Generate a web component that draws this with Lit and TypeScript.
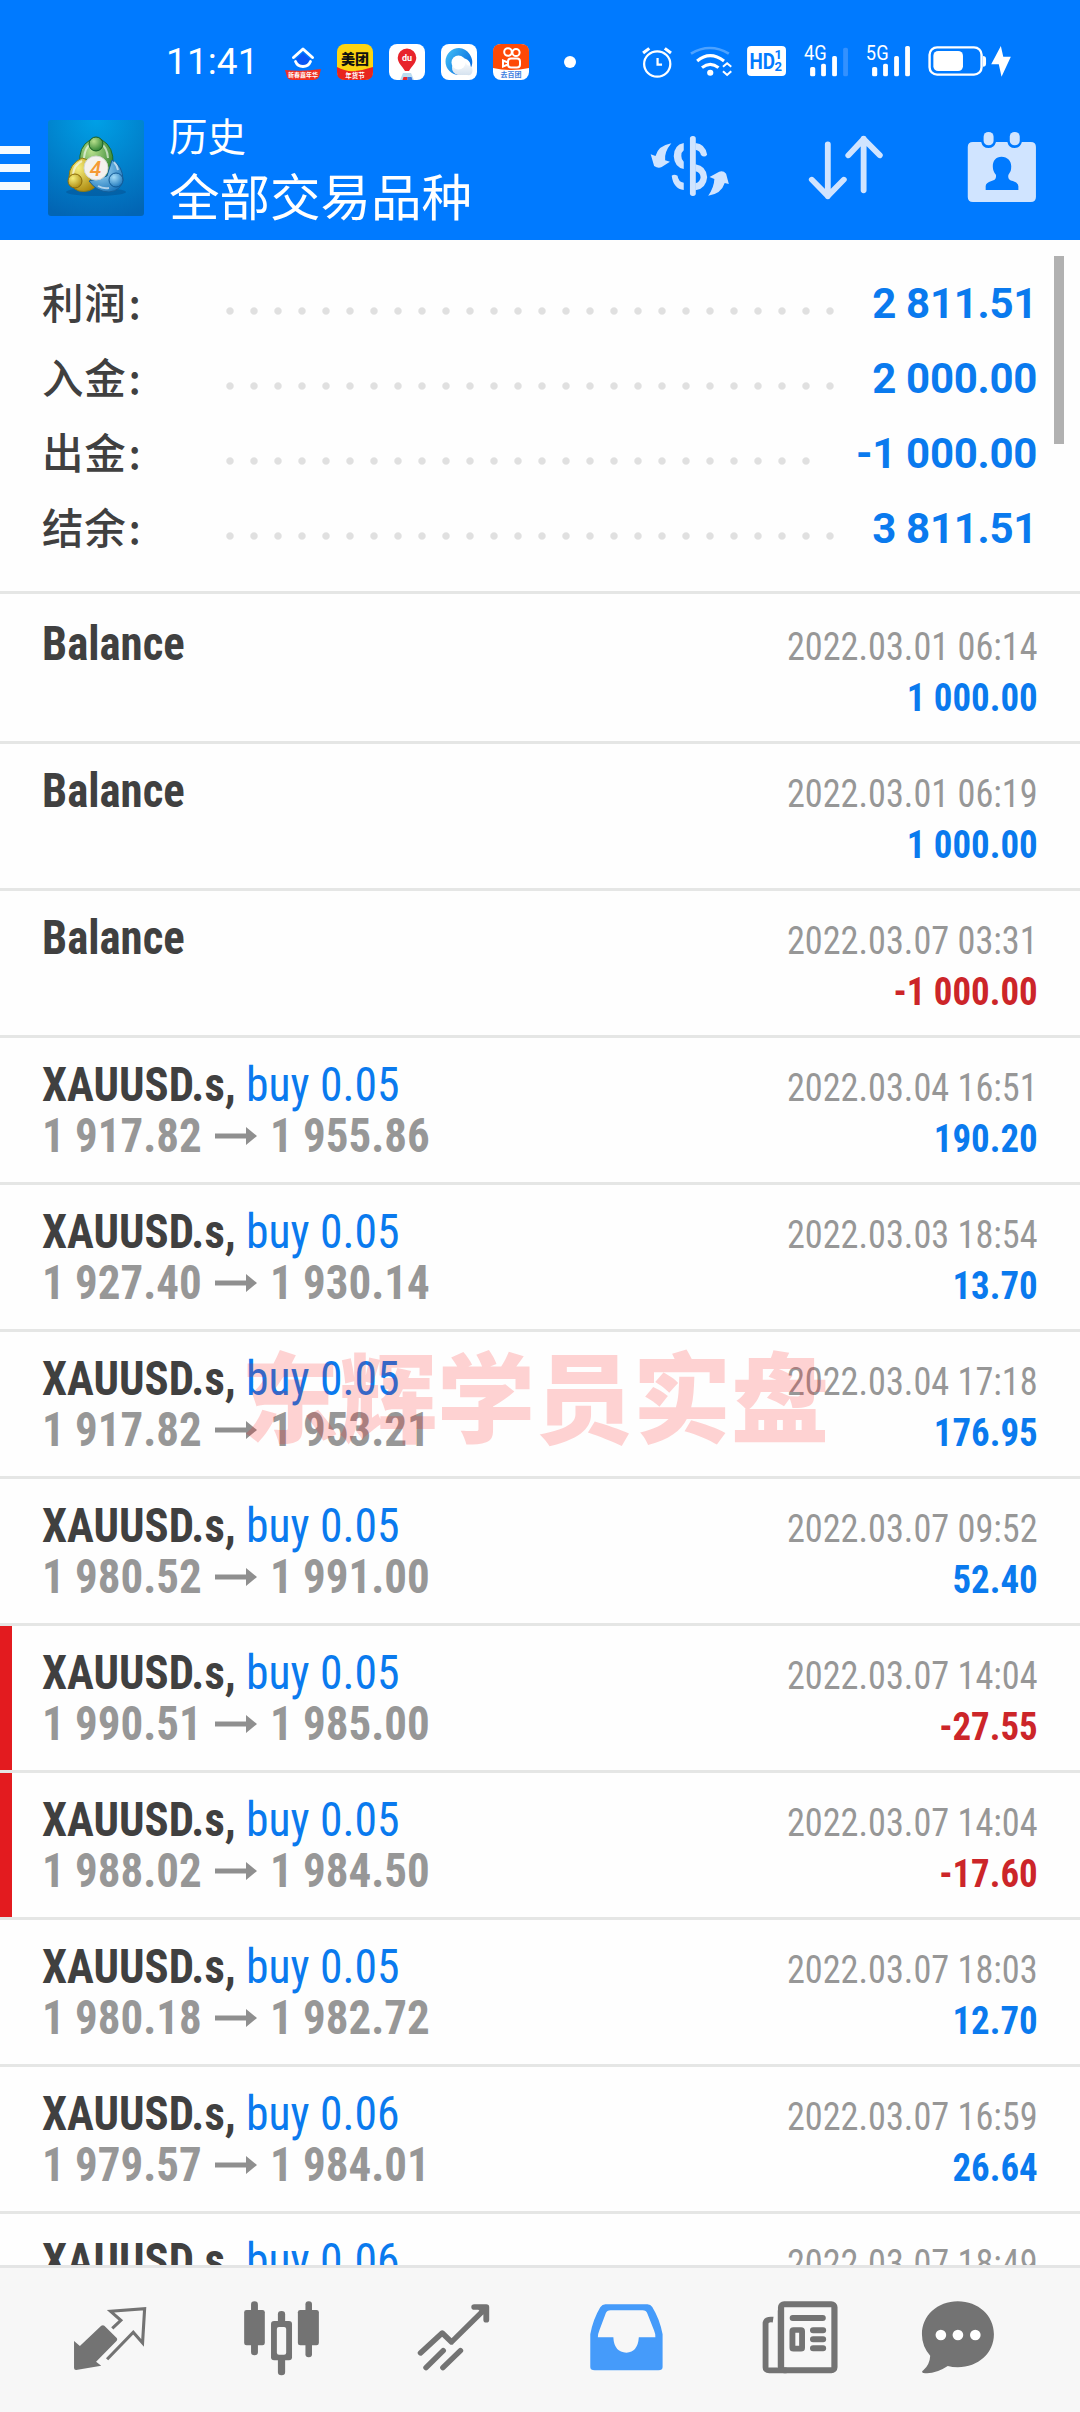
import { LitElement, html, svg, css, nothing } from "lit";
import { customElement, property } from "lit/decorators.js";
import { classMap } from "lit/directives/class-map.js";

interface Deal {
  symbol?: string;
  side?: string;
  open?: string;
  close?: string;
  time: string;
  profit: string;
  stopped?: boolean;
}

const SUMMARY = [
  { label: "利润", value: "2 811.51" },
  { label: "入金", value: "2 000.00" },
  { label: "出金", value: "-1 000.00" },
  { label: "结余", value: "3 811.51" },
];

const deal = (side: string, open: string, close: string, time: string, profit: string, stopped = false): Deal => ({
  symbol: "XAUUSD.s,", side, open, close, time, profit, stopped,
});

const DEALS: Deal[] = [
  { time: "2022.03.01 06:14", profit: "1 000.00" },
  { time: "2022.03.01 06:19", profit: "1 000.00" },
  { time: "2022.03.07 03:31", profit: "-1 000.00" },
  deal("buy 0.05", "1 917.82", "1 955.86", "2022.03.04 16:51", "190.20"),
  deal("buy 0.05", "1 927.40", "1 930.14", "2022.03.03 18:54", "13.70"),
  deal("buy 0.05", "1 917.82", "1 953.21", "2022.03.04 17:18", "176.95"),
  deal("buy 0.05", "1 980.52", "1 991.00", "2022.03.07 09:52", "52.40"),
  deal("buy 0.05", "1 990.51", "1 985.00", "2022.03.07 14:04", "-27.55", true),
  deal("buy 0.05", "1 988.02", "1 984.50", "2022.03.07 14:04", "-17.60", true),
  deal("buy 0.05", "1 980.18", "1 982.72", "2022.03.07 18:03", "12.70"),
  deal("buy 0.06", "1 979.57", "1 984.01", "2022.03.07 16:59", "26.64"),
  { symbol: "XAUUSD.s,", side: "buy 0.06", time: "2022.03.07 18:49", profit: "" },
];

/* ---------- status bar ---------- */
@customElement("status-bar")
export class StatusBar extends LitElement {
  static styles = css`
    :host { display: block; }
    .bar { display: flex; align-items: center; height: 96px; padding-top: 28px; box-sizing: border-box; color: #fff; }
    .time { width: 285px; padding-left: 166px; box-sizing: border-box; font: 400 37px/36px Roboto, sans-serif; letter-spacing: 0.100px; white-space: nowrap; }
    .apps { display: flex; gap: 16px; }
    svg { display: block; flex: none; }
    .dot { width: 12px; height: 12px; border-radius: 50%; background: #fff; margin-left: 35px; }
    .system { margin-left: 64px; }
    text { font-family: "Roboto", "Noto Sans CJK SC", sans-serif; }
  `;
  render() {
    return html`
      <div class="bar">
        <div class="time">11:41</div>
        <div class="apps">
          <svg width="36" height="36" viewBox="0 0 36 36">
            <path d="M18 9l7 6-3 5q-4 3-8 0l-3-5z" fill="#0a56f5"/>
            <path d="M8.500 13.500 18 5l9.500 8.500" fill="none" stroke="#fff" stroke-width="3" stroke-linecap="round" stroke-linejoin="round"/>
            <path d="M10.500 17.500q2 5 7.500 5t7.500-5" fill="none" stroke="#fff" stroke-width="2.800" stroke-linecap="round"/>
            <path d="M0 26q18 2 36-1l-2 8q-2 3-6 3H8q-5 0-6-3z" fill="#ee2f22"/>
            <text x="18" y="33.300" font-size="6" font-weight="700" fill="#fff" text-anchor="middle">新春嘉年华</text>
          </svg>
          <svg width="36" height="36" viewBox="0 0 36 36">
            <rect width="36" height="36" rx="8" fill="#fcd411"/>
            <path d="M0 23q9 5 18 4t18-4v5q0 8-8 8H8q-8 0-8-8z" fill="#e8251d"/>
            <text x="18" y="20" font-size="14" font-weight="900" fill="#111" text-anchor="middle">美团</text>
            <text x="18" y="34" font-size="6.500" font-weight="700" fill="#fff" text-anchor="middle">年货节</text>
          </svg>
          <svg width="36" height="36" viewBox="0 0 36 36">
            <rect width="36" height="36" rx="8" fill="#fff"/>
            <path d="M14 29h8l3 7H11z" fill="#bcdcf0"/><path d="M14.500 33h4v3h-5z" fill="#e8262c"/><path d="M18.500 33h4l1 3h-5z" fill="#3b78e0"/>
            <path d="M18 4.500a9.300 9.300 0 0 1 9.300 9.300c0 5-4.500 8.500-7.300 13.200h-4c-2.800-4.700-7.300-8.200-7.300-13.200A9.300 9.300 0 0 1 18 4.500z" fill="#e8232b"/>
            <text x="18" y="17" font-size="9" font-weight="700" fill="#fff" text-anchor="middle">du</text>
          </svg>
          <svg width="36" height="36" viewBox="0 0 36 36">
            <defs>
              <linearGradient id="q" x1="0" y1="0" x2="1" y2="0.600"><stop offset="0" stop-color="#45c2f6"/><stop offset="1" stop-color="#086ee0"/></linearGradient>
              <linearGradient id="c" x1="0" y1="0" x2="0" y2="1"><stop offset="0" stop-color="#fff"/><stop offset="1" stop-color="#d5e2ef"/></linearGradient>
            </defs>
            <rect width="36" height="36" rx="8" fill="#fff"/>
            <path d="M18 4a13 13 0 1 0 0 27 10 10 0 0 1-6-8 9 9 0 0 1 13-8c4 2 5 5 4.500 9.500 3-5 2-10-1-14.500A14 14 0 0 0 18 4z" fill="url(#q)"/>
            <path d="M17 31a7.500 7.500 0 0 1-6-8q1-7 8-7 5 0 7 5 6 1 5.500 6t-5.500 4z" fill="url(#c)"/>
            <circle cx="17.500" cy="18.500" r="7" fill="#fff"/>
          </svg>
          <svg width="36" height="36" viewBox="0 0 36 36">
            <rect width="36" height="36" rx="8" fill="#fff"/>
            <path d="M0 24V8q0-8 8-8h20q8 0 8 8v16q-18 4-36 0z" fill="#fe4906"/>
            <g fill="none" stroke="#fff" stroke-width="2"><circle cx="15" cy="8" r="3.800"/><circle cx="23" cy="8.500" r="3.600"/><rect x="15" y="14.500" width="12" height="9" rx="3"/><path d="M10 16.500v6l5-2v-2z"/></g>
            <text x="18" y="33" font-size="7" font-weight="700" fill="#3d7ee0" text-anchor="middle">去百团</text>
          </svg>
        </div>
        <div class="dot"></div>
        <!-- alarm, wifi, voice line, two signal meters and the battery -->
        <svg class="system" width="376" height="36" viewBox="290 132 1092 108" preserveAspectRatio="none">
          <g fill="none" stroke="#fff" stroke-width="6.500">
            <circle cx="340" cy="192" r="38"/>
            <path d="M341 174v20h13"/>
            <path d="M299 159l18-14M380 159l-18-14" stroke-width="9"/>
          </g>
          <g fill="none" stroke="#fff">
            <path d="M438 161q55-34 110 0" stroke="#4da2ff" stroke-width="8"/>
            <path d="M456 183q37-32 78 0" stroke-width="9"/>
            <path d="M470 203q24-20 48 0" stroke-width="9"/>
            <path d="M531 200l12-10 12 10M531 214l12 11 12-11" stroke-width="6"/>
          </g>
          <circle cx="494" cy="218" r="9" fill="#fff"/>
          <rect x="601" y="138" width="113" height="90" rx="12" fill="#fff"/>
          <g fill="#007aff" font-weight="700">
            <text x="608" y="206" font-size="64" textLength="74" lengthAdjust="spacingAndGlyphs">HD</text>
            <text x="681" y="178" font-size="38">1</text>
            <text x="681" y="213" font-size="38">2</text>
          </g>
          <g fill="#fff">
            <text x="766" y="181" font-size="58" textLength="66" lengthAdjust="spacingAndGlyphs">4G</text>
            <rect x="784" y="201" width="15" height="28" rx="5"/><rect x="816" y="191" width="14" height="38" rx="5"/><rect x="848" y="168" width="14" height="61" rx="5"/>
            <rect x="880" y="143" width="14" height="86" rx="5" fill="#3391ff"/>
            <text x="946" y="181" font-size="58" textLength="66" lengthAdjust="spacingAndGlyphs">5G</text>
            <rect x="964" y="201" width="15" height="28" rx="5"/><rect x="996" y="191" width="14" height="38" rx="5"/><rect x="1028" y="168" width="14" height="61" rx="5"/><rect x="1060" y="138" width="14" height="91" rx="5"/>
            <rect x="1142" y="153" width="86" height="60" rx="14"/>
            <path d="M1286 168q9 0 9 9v14q0 9-9 9z"/>
            <path d="M1338 138l-28 55h22l8 37 27-60h-22z"/>
          </g>
          <rect x="1131" y="142" width="151" height="82" rx="22" fill="none" stroke="#fff" stroke-width="7"/>
        </svg>
      </div>
    `;
  }
}

/* ---------- title bar ---------- */
@customElement("title-bar")
export class TitleBar extends LitElement {
  static styles = css`
    :host { display: block; }
    .bar { display: flex; align-items: center; height: 144px; color: #fff; }
    svg { display: block; flex: none; }
    .menu { width: 30px; height: 44px; display: flex; flex-direction: column; justify-content: space-between; margin-right: 18px; }
    .menu i { height: 8px; background: #f4faff; }
    .titles { margin-left: 25px; width: 481px; font-family: "Noto Sans CJK SC", sans-serif; font-weight: 400; white-space: nowrap; }
    .sub { font-size: 38.500px; line-height: 54px; margin-top: -4px; }
    .main { font-size: 50.500px; line-height: 64px; margin-top: 1px; }
  `;
  render() {
    return html`
      <div class="bar">
        <div class="menu"><i></i><i></i><i></i></div>
        <svg width="96" height="96" viewBox="0 0 96 96">
          <defs>
            <radialGradient id="bg" cx="0.500" cy="0" r="1.050"><stop offset="0" stop-color="#00a0e6"/><stop offset="1" stop-color="#0265b4"/></radialGradient>
            <radialGradient id="g" cx="0.350" cy="0.300" r="0.800"><stop offset="0" stop-color="#b8e08c"/><stop offset="1" stop-color="#237a2a"/></radialGradient>
            <radialGradient id="y" cx="0.350" cy="0.300" r="0.800"><stop offset="0" stop-color="#f6ee7a"/><stop offset="1" stop-color="#a98409"/></radialGradient>
            <radialGradient id="b" cx="0.350" cy="0.300" r="0.800"><stop offset="0" stop-color="#a4dcf8"/><stop offset="1" stop-color="#1470b8"/></radialGradient>
          </defs>
          <rect width="96" height="96" rx="3" fill="url(#bg)"/>
          <ellipse cx="48" cy="72" rx="30" ry="4" fill="#04508f" opacity="0.500"/>
          <path d="M32 44q-2-17 10-24h12q12 7 11 24-1 8-9 13l-16-4z" fill="url(#g)" stroke="#1c6b2c"/>
          <path d="M48 66q-6 7-17 5-9-3-10-14 0-13 13-19 5 0 8 6l-2 12z" fill="url(#y)" stroke="#8c7a12"/>
          <path d="M41 61l18-5 5-16q11 6 11 20-2 11-14 12-12 0-20-11z" fill="url(#b)" stroke="#145f9c"/>
          <path d="M36 38q1-11 7-14M60 38q-1-11-7-14M25 54q1-9 9-13M70 50q-1-5-4-8M50 66q5 3 11 2" fill="none" stroke="#fff" stroke-opacity="0.600" stroke-width="2"/>
          <circle cx="48" cy="24" r="7" fill="url(#g)" stroke="#155c22"/>
          <circle cx="27" cy="61" r="7" fill="url(#y)" stroke="#8a6a0a"/>
          <circle cx="68" cy="60" r="7" fill="url(#b)" stroke="#135a96"/>
          <circle cx="48" cy="48" r="12" fill="#f4f1ee" stroke="#cfd6cf"/>
          <text x="47.500" y="55.500" font-family="Roboto, sans-serif" font-size="21" font-weight="500" font-style="italic" fill="#f59a35" text-anchor="middle">4</text>
        </svg>
        <div class="titles">
          <div class="sub">历史</div>
          <div class="main">全部交易品种</div>
        </div>
        <!-- currency cycle, sort, period; one strip of three icons -->
        <svg width="388" height="76" viewBox="320 390 1127 228" preserveAspectRatio="none">
          <g fill="#d0e4ff" stroke="none">
            <rect x="436" y="408" width="17" height="180" rx="8"/>
            <path d="M382 430q-38 7-46 38l-14-5 10 35q12 9 22 3l24-16-14-4q-3-25 18-51z"/>
            <path d="M489 587q38-5 48-38l12 3-8-31q-8-10-20-6l-28 16 14 6q-1 26-18 50z"/>
            <path d="M418 429q-29 6-29 40 2 33 29 38v-22q-7-5-7-17t7-17z"/>
            <path d="M383 527q7-6 17 0 2 18 18 21v22q-30-4-35-43z"/>
            <path d="M452 429q28 2 34 35-8 11-18 1-2-13-16-16zM452 493q32 5 34 39-3 35-34 39v-21q14-4 15-18-1-15-15-18z"/>
          </g>
          <path d="M836.500 433v156M790 539l46.500 49 46.500-49M940.500 571V416M896 466l44.500-49 47 49" fill="none" stroke="#d0e4ff" stroke-width="17" stroke-linecap="round" stroke-linejoin="round"/>
          <path fill="#d0e4ff" fill-rule="evenodd" d="M1258 426h24q4 18 21 18t22-18h33q4 18 21 18t21-18h26q15 0 15 15v150q0 15-15 15h-168q-15 0-15-15V441q0-15 15-15zM1341 470c-18 0-27 15-25 33 1 12 6 16 9 22 1 12-3 16-13 18q-17 5-17 16v11h95v-11q0-11-16-16c-11-3-15-7-13-18 3-7 8-10 8-22 2-18-9-33-28-33z"/>
          <rect x="1289" y="396" width="29" height="40" rx="14" fill="#d0e4ff"/>
          <rect x="1365" y="396" width="29" height="40" rx="14" fill="#d0e4ff"/>
        </svg>
      </div>
    `;
  }
}

/* ---------- account totals ---------- */
@customElement("account-summary")
export class AccountSummary extends LitElement {
  static styles = css`
    :host { display: block; }
    .summary { height: 354px; box-sizing: border-box; padding: 24px 43px 0 42px; border-bottom: 3px solid #e5e6e5; }
    .line { display: flex; height: 75px; align-items: center; }
    .label { width: 176px; font: 500 41.500px/75px "Noto Sans CJK SC", sans-serif; letter-spacing: 0.700px; color: #404040; }
    .label::after { content: ":"; margin-left: 2px; }
    .dots { flex: 1; height: 24px; margin: 19px 38px 0 0; background: radial-gradient(circle at 12px 12px, #e0e0e0 3.200px, transparent 4.200px) 0 0 / 24px 24px repeat-x; }
    .value { font: 700 42px/75px Roboto, sans-serif; padding-top: 4px; letter-spacing: -0.300px; color: #0a7aee; white-space: nowrap; }
  `;
  render() {
    return html`<div class="summary">
      ${SUMMARY.map((s) => html`<div class="line"><div class="label">${s.label}</div><div class="dots"></div><div class="value">${s.value}</div></div>`)}
    </div>`;
  }
}

/* ---------- one history entry ---------- */
@customElement("deal-row")
export class DealRow extends LitElement {
  @property({ attribute: false }) deal!: Deal;

  static styles = css`
    :host { display: block; height: 147px; box-sizing: border-box; border-bottom: 3px solid #e5e6e5; }
    .row { display: flex; justify-content: space-between; height: 144px; box-sizing: border-box; padding: 21px 42px 0 30px; border-left: 12px solid transparent; font-family: Roboto, sans-serif; line-height: 51px; white-space: nowrap; font-stretch: 75%; }
    .row.stopped { border-left-color: #e31b1f; }
    .title { font-size: 48px; height: 51px; display: flex; }
    .name { color: #404040; font-weight: 700; transform: scaleX(0.933); transform-origin: left; }
    .name.symbol { width: 204px; }
    .side { color: #0a7aee; transform: scaleX(0.950); transform-origin: left; }
    .prices { font-size: 48px; height: 51px; display: flex; color: #979797; font-weight: 700; }
    .price { width: 173px; transform: scaleX(0.937); transform-origin: left; }
    .arrow { display: block; width: 42px; height: 18px; margin: 17px 13px 0 0; flex: none; }
    .side-col { text-align: right; padding-top: 4px; font-size: 39px; }
    .time { color: #979797; transform: scaleX(0.930); transform-origin: right; }
    .profit { color: #0a7aee; font-weight: 700; transform: scaleX(0.945); transform-origin: right; }
    .profit.loss { color: #cc2529; }
  `;
  render() {
    const d = this.deal;
    return html`
      <div class=${classMap({ row: true, stopped: !!d.stopped })}>
        <div>
          <div class="title">
            <span class=${classMap({ name: true, symbol: !!d.symbol })}>${d.symbol ?? "Balance"}</span>
            ${d.side ? html`<span class="side">${d.side}</span>` : nothing}
          </div>
          ${d.open
            ? html`<div class="prices">
                <span class="price">${d.open}</span>
                <svg class="arrow" viewBox="0 0 42 18"><path d="M0 6.500h31V0L42 9 31 18v-6.500H0z" fill="#8f8f8f"/></svg>
                <span class="price">${d.close}</span>
              </div>`
            : nothing}
        </div>
        <div class="side-col">
          <div class="time">${d.time}</div>
          ${d.profit ? html`<div class=${classMap({ profit: true, loss: d.profit.startsWith("-") })}>${d.profit}</div>` : nothing}
        </div>
      </div>
    `;
  }
}

/* ---------- bottom navigation ---------- */
const G = "#737373";
const TABS = [
  svg`<path d="M215 422l17 15 62-61q5-3 9 0l36 37q3 4 0 8l-60 63 15 12-73 13q-6 0-6-6z" fill="${G}"/>
      <path d="M326 384l25-24-30-27 99-8-6 103-27-32-76 81" fill="none" stroke="${G}" stroke-width="9"/>`,
  svg`<g transform="translate(-522.700 0)"><g fill="${G}">
      <rect x="729" y="303" width="20" height="162" rx="10"/><rect x="709" y="329" width="60" height="106" rx="7"/>
      <rect x="887" y="303" width="19" height="168" rx="9"/><rect x="865" y="329" width="61" height="106" rx="7"/>
      <rect x="807" y="332" width="21" height="193" rx="10"/><rect x="787" y="362" width="61" height="118" rx="9"/></g>
      <rect x="804" y="380" width="27" height="83" rx="6" fill="#f7f7f7"/></g>`,
  svg`<g transform="translate(-1045.300 0)" fill="none" stroke="${G}" stroke-width="16" stroke-linecap="round" stroke-linejoin="round">
      <path d="M1221 458l63-60 27 27 96-98M1237 502l50-51M1286 502l51-51"/><path d="M1377 320h35v38" stroke-width="17"/><path d="M1396 324l13-2v14z"/></g>`,
  svg`<path fill="#459bfa" fill-rule="evenodd" d="M190 312h122q9 0 14 8 22 37 30 82v98q0 10-12 10H159q-13 0-13-10v-98q8-45 29-81 6-9 15-9zM205 330q-11 0-14 9l-18 49q-5 12-5 23h45q2 45 38 46 33-1 36-46h48q1-9-4-21l-19-50q-4-10-14-10z"/>`,
  svg`<g transform="translate(-522.700 0)" fill="none" stroke="${G}">
      <rect x="700" y="312" width="155" height="198" rx="9" stroke-width="18"/>
      <path d="M677 358q-22-3-22 13v130q0 9 11 9h50" stroke-width="17"/>
      <path d="M694 330v171" stroke-width="7"/>
      <path d="M734 353h87M793 390h29M793 417h29M793 444h29" stroke-width="18" stroke-linecap="round"/>
      <rect x="733" y="389" width="28" height="56" rx="3" stroke-width="17"/></g>`,
  svg`<g transform="translate(-1045.300 0)"><path fill="${G}" d="M1213 303c60 0 105 43 105 99s-45 99-105 99q-16 0-29-4-38 26-71 21-7-3 0-8 19-18 20-44-24-27-24-64c0-56 45-99 104-99z"/>
      <g fill="#fff"><circle cx="1164" cy="404" r="15.500"/><circle cx="1213.500" cy="404" r="15.500"/><circle cx="1264" cy="404" r="15.500"/></g></g>`,
];

@customElement("bottom-nav")
export class BottomNav extends LitElement {
  static styles = css`
    :host { display: block; }
    .nav { display: grid; grid-template-columns: repeat(6, 180px); height: 147px; box-sizing: border-box; padding-top: 31px; border-top: 3px solid #e4e5e5; background: #f7f7f7; }
    svg { display: block; }
  `;
  render() {
    return html`<div class="nav">
      ${TABS.map((t) => html`<svg width="180" height="78" viewBox="0 296 522.700 234" preserveAspectRatio="none">${t}</svg>`)}
    </div>`;
  }
}

/* ---------- screen ---------- */
@customElement("app-root")
export class AppRoot extends LitElement {
  static styles = css`
    :host { display: block; width: 1080px; }
    .screen { position: relative; display: flex; flex-direction: column; height: 2412px; overflow: hidden; background: #fefefe; }
    .top { flex: none; background: #007aff; }
    .list { flex: 1; min-height: 0; overflow: hidden; }
    .list deal-row:first-of-type { height: 150px; padding-top: 3px; }
    .nav { flex: none; }
    .scrollbar { position: absolute; left: 1054px; top: 256px; width: 10px; height: 188px; background: #b1b1b1; }
    .watermark { position: absolute; left: 241px; top: 1332px; font: 900 98px/120px "Noto Sans CJK SC", sans-serif; color: rgba(255, 20, 20, 0.190); white-space: nowrap; }
  `;
  render() {
    return html`
      <div class="screen">
        <div class="top"><status-bar></status-bar><title-bar></title-bar></div>
        <div class="list">
          <account-summary></account-summary>
          ${DEALS.map((d) => html`<deal-row .deal=${d}></deal-row>`)}
        </div>
        <bottom-nav class="nav"></bottom-nav>
        <div class="scrollbar"></div>
        <div class="watermark">东辉学员实盘</div>
      </div>
    `;
  }
}
